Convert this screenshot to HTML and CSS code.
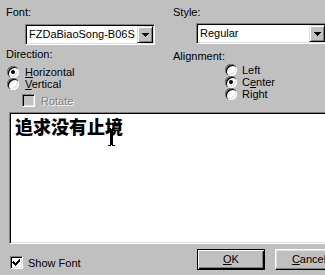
FILE: index.html
```html
<!DOCTYPE html>
<html>
<head>
<meta charset="utf-8">
<link rel="stylesheet" href="styles.css">
</head>
<body>
<div class="dlg">
  <div class="top">
    <div class="col">
      <div class="lbl">Font:</div>
      <div class="combo font-combo">
        <span class="val">FZDaBiaoSong-B06S</span>
        <span class="dd"><svg width="7" height="4" viewBox="0 0 7 4" shape-rendering="crispEdges"><path d="M0 0h7v1h-1v1h-1v1h-1v1h-1v-1h-1v-1h-1v-1h-1z" fill="#000"/></svg></span>
      </div>
      <div class="lbl dir">Direction:</div>
      <div class="radios dir-opts">
        <div class="opt"><span class="radio on"></span><span><u>H</u>orizontal</span></div>
        <div class="opt"><span class="radio"></span><span><u>V</u>ertical</span></div>
      </div>
      <div class="opt rotate disabled"><span class="check off"></span><span>Rotate</span></div>
    </div>
    <div class="col">
      <div class="lbl">Style:</div>
      <div class="combo style-combo">
        <span class="val">Regular</span>
        <span class="dd"><svg width="7" height="4" viewBox="0 0 7 4" shape-rendering="crispEdges"><path d="M0 0h7v1h-1v1h-1v1h-1v1h-1v-1h-1v-1h-1v-1h-1z" fill="#000"/></svg></span>
      </div>
      <div class="lbl align">Alignment:</div>
      <div class="radios align-opts">
        <div class="opt"><span class="radio"></span><span>Left</span></div>
        <div class="opt"><span class="radio on"></span><span>C<u>e</u>nter</span></div>
        <div class="opt"><span class="radio"></span><span>Right</span></div>
      </div>
    </div>
  </div>
  <div class="preview">
    <span class="sample">追求没有止境</span>
    <svg class="ibeam" width="7" height="18" viewBox="0 0 7 18" shape-rendering="crispEdges"><path d="M0 0h3v1h1v-1h3v1h-2v16h2v1h-3v-1h-1v1h-3v-1h2v-16h-2z" fill="#000"/></svg>
  </div>
  <div class="bottom">
    <div class="opt show"><span class="check"><svg width="9" height="9" viewBox="0 0 9 9" shape-rendering="crispEdges"><path d="M1 3h1v1h1v1h1v-1h1v-1h1v-1h1v-1h1v3h-1v1h-1v1h-1v1h-1v1h-1v-1h-1v-1h-1v-1h-1z" fill="#000"/></svg></span><span>Show Font</span></div>
    <div class="buttons">
      <div class="btn default"><u>O</u>K</div>
      <div class="btn"><u>C</u>ancel</div>
    </div>
  </div>
</div>
</body>
</html>
```
FILE: styles.css
```css
html, body {
  margin: 0;
  padding: 0;
}
body {
  background: #c0c0c0;
  font: 11px/13px "Liberation Sans", Arial, sans-serif;
  color: #000;
  width: 325px;
  height: 275px;
  overflow: hidden;
}
.dlg {
  width: 360px;
}
.top {
  display: grid;
  grid-template-columns: 167px 1fr;
  padding: 6px 0 0 6px;
}
.col {
  display: flex;
  flex-direction: column;
  align-items: flex-start;
}
.lbl {
  height: 13px;
}
.combo {
  box-sizing: border-box;
  height: 21px;
  background: #fff;
  border: 1px solid;
  border-color: #808080 #fff #fff #808080;
  box-shadow: inset 1px 1px #000, inset -1px -1px #dfdfdf;
  display: flex;
  align-items: center;
  justify-content: space-between;
  padding: 1px;
}
.combo .val {
  padding-left: 2px;
  line-height: 13px;
}
.dd {
  box-sizing: border-box;
  width: 16px;
  height: 17px;
  background: #c0c0c0;
  border: 1px solid;
  border-color: #dfdfdf #000 #000 #dfdfdf;
  box-shadow: inset 1px 1px #fff, inset -1px -1px #808080;
  display: flex;
  align-items: center;
  justify-content: center;
}
.dd svg {
  display: block;
}
.font-combo {
  margin: 5px 0 0 19px;
  width: 130px;
}
.style-combo {
  margin: 4px 0 0 23px;
  width: 131px;
}
.dir {
  margin-top: 3px;
}
.align {
  margin-top: 6px;
}
.radios {
  display: flex;
  flex-direction: column;
}
.dir-opts {
  margin-top: 5px;
  margin-left: 1px;
}
.dir-opts .opt {
  gap: 6px;
}
.align-opts {
  margin-top: 1px;
  margin-left: 52px;
}
.align-opts .opt {
  gap: 5px;
}
.opt {
  display: flex;
  align-items: center;
  height: 12px;
  line-height: 12px;
  white-space: nowrap;
}
.radio {
  position: relative;
  width: 12px;
  height: 12px;
  border-radius: 50%;
  background: #fff;
  box-shadow: inset 1px 1px #808080, inset 2px 2px #000, inset -1px -1px #fff, inset -2px -2px #dfdfdf;
  flex: none;
}
.radio.on::after {
  content: "";
  position: absolute;
  left: 4px;
  top: 4px;
  width: 4px;
  height: 4px;
  border-radius: 50%;
  background: #000;
}
.check {
  box-sizing: border-box;
  width: 13px;
  height: 13px;
  background: #fff;
  border: 1px solid;
  border-color: #808080 #fff #fff #808080;
  box-shadow: inset 1px 1px #000, inset -1px -1px #dfdfdf;
  display: flex;
  align-items: center;
  justify-content: center;
  flex: none;
}
.check svg {
  display: block;
}
.check.off {
  background: #c0c0c0;
}
.rotate {
  margin: 4px 0 0 16px;
  height: 13px;
  gap: 6px;
}
.disabled {
  color: #808080;
  text-shadow: 1px 1px #fff;
}
.preview {
  position: relative;
  box-sizing: border-box;
  margin: 5px 0 0 9px;
  width: 340px;
  height: 132px;
  background: #fff;
  border: 1px solid;
  border-color: #808080 #fff #fff #808080;
  box-shadow: inset 1px 1px #000, inset -1px -1px #dfdfdf;
  padding: 4px 0 0 5px;
}
.sample {
  font-family: "Noto Sans CJK SC", sans-serif;
  font-weight: 900;
  font-size: 18px;
  line-height: 18px;
}
.ibeam {
  position: absolute;
  left: 98px;
  top: 15px;
}
.bottom {
  display: flex;
  align-items: flex-start;
  margin-top: 5px;
  padding-left: 10px;
}
.show {
  width: 187px;
  margin-top: 7px;
  height: 13px;
  gap: 5px;
}
.buttons {
  display: flex;
  gap: 10px;
}
.btn {
  box-sizing: border-box;
  width: 68px;
  height: 21px;
  line-height: 19px;
  text-align: center;
  border: 1px solid;
  border-color: #fff #000 #000 #fff;
  box-shadow: inset -1px -1px #808080, inset 1px 1px #dfdfdf;
}
.btn.default {
  border-color: #000;
  box-shadow: inset 1px 1px #fff, inset -1px -1px #000, inset -2px -2px #808080;
}
```
